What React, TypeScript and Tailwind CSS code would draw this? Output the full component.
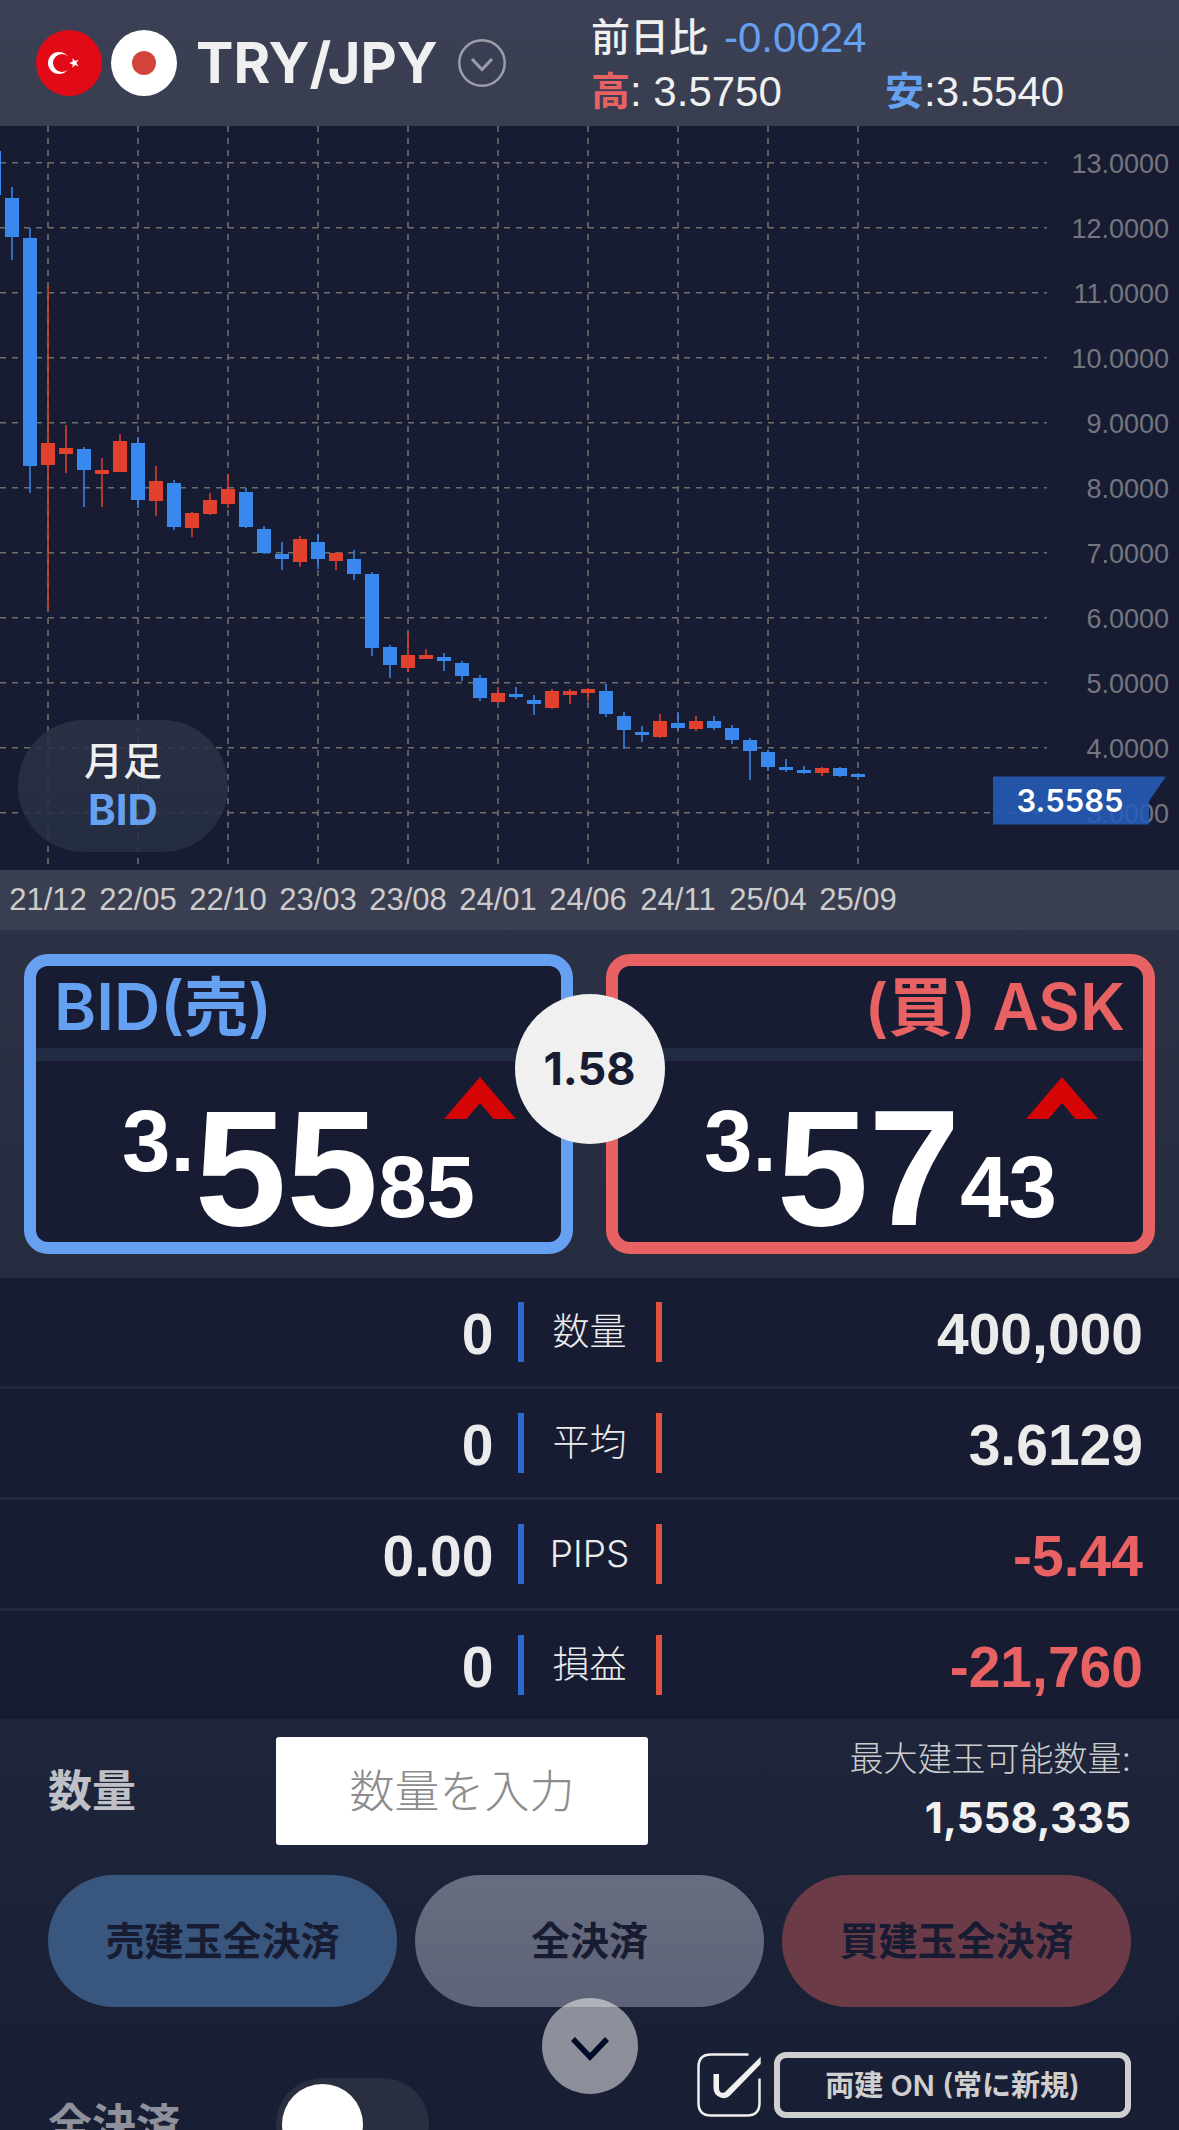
import React from "react";

type Candle = [dir: "u" | "d", open: number, close: number, high: number, low: number];

const CANDLES: Candle[] = [
  ["d", 151, 195, 151, 195],
  ["d", 198, 237, 187, 260],
  ["d", 238, 466, 228, 493],
  ["u", 443, 465, 286, 609],
  ["u", 448, 454, 425, 473],
  ["d", 449, 470, 447, 507],
  ["u", 470, 474, 458, 507],
  ["u", 441, 472, 434, 472],
  ["d", 443, 500, 437, 508],
  ["u", 481, 501, 466, 516],
  ["d", 483, 527, 480, 530],
  ["u", 513, 528, 512, 537],
  ["u", 500, 514, 493, 515],
  ["u", 489, 504, 474, 508],
  ["d", 492, 527, 488, 528],
  ["d", 529, 553, 526, 554],
  ["d", 554, 559, 542, 570],
  ["u", 539, 562, 536, 567],
  ["d", 542, 559, 534, 569],
  ["u", 553, 561, 552, 570],
  ["d", 559, 574, 550, 580],
  ["d", 574, 648, 572, 656],
  ["d", 647, 665, 645, 678],
  ["u", 655, 668, 633, 672],
  ["u", 655, 659, 649, 659],
  ["d", 657, 661, 653, 671],
  ["d", 663, 676, 661, 681],
  ["d", 678, 698, 675, 701],
  ["u", 693, 702, 687, 702],
  ["d", 694, 697, 687, 699],
  ["d", 700, 704, 695, 715],
  ["u", 691, 708, 689, 709],
  ["u", 691, 695, 689, 704],
  ["u", 689, 693, 688, 701],
  ["d", 691, 714, 684, 717],
  ["d", 716, 730, 712, 749],
  ["d", 732, 735, 726, 742],
  ["u", 721, 737, 714, 738],
  ["d", 723, 728, 712, 730],
  ["u", 721, 729, 716, 731],
  ["d", 721, 728, 716, 730],
  ["d", 728, 740, 725, 744],
  ["d", 740, 751, 738, 780],
  ["d", 752, 767, 750, 771],
  ["d", 767, 770, 759, 772],
  ["d", 770, 773, 766, 774],
  ["u", 768, 773, 767, 776],
  ["d", 768, 776, 767, 777],
  ["d", 774, 777, 773, 778],
];

const CHART_TOP = 126;
const PRICES = ["13.0000", "12.0000", "11.0000", "10.0000", "9.0000", "8.0000", "7.0000", "6.0000", "5.0000", "4.0000", "3.0000"];
const MONTHS = ["21/12", "22/05", "22/10", "23/03", "23/08", "24/01", "24/06", "24/11", "25/04", "25/09"];

const HELV = "font-['Liberation_Sans','Noto_Sans_CJK_JP',sans-serif]";
const INTER = "font-['Inter','Noto_Sans_CJK_JP',sans-serif]";

function Header() {
  return (
    <header className="flex h-[126px] shrink-0 items-center bg-linear-to-b from-[#3b4054] to-[#383d50] pl-9 text-[#f0f0f0]">
      <button type="button" aria-label="通貨ペア TRY/JPY" className="flex w-[555px] shrink-0 items-center">
        <svg viewBox="0 0 66 66" className="mr-[9px] size-[66px]" aria-hidden="true">
          <circle cx="33" cy="33" r="33" fill="#e30a17" />
          <circle cx="23" cy="33" r="11" fill="#fff" />
          <circle cx="26" cy="33" r="9" fill="#e30a17" />
          <path d="M33 33l3.6-1.2v-3.9l2.3 3.1 3.7-1.2-2.3 3.2 2.3 3.2-3.7-1.2-2.3 3.1v-3.9z" fill="#fff" />
        </svg>
        <svg viewBox="0 0 66 66" className="size-[66px]" aria-hidden="true">
          <circle cx="33" cy="33" r="33" fill="#fff" />
          <circle cx="33" cy="33" r="12" fill="#d3453c" />
        </svg>
        <span className={`${INTER} ml-[19px] text-[56px] leading-none font-bold`}>TRY/JPY</span>
        <svg viewBox="0 0 48 48" className="ml-5 size-12" fill="none" stroke="#9b9ea9" strokeWidth="2.5" aria-hidden="true">
          <circle cx="24" cy="24" r="22.7" />
          <path d="M14 20l10 10.500 10-10.500" strokeWidth="3" />
        </svg>
      </button>
      <dl className={`${HELV} grid w-[590px] grid-cols-2 pt-1 text-[42px] leading-[54px]`}>
        <div className="col-span-2 flex items-center gap-4">
          <dt className="text-[39px] font-medium">前日比</dt>
          <dd className="text-[#66a1f1]">-0.0024</dd>
        </div>
        <div className="flex items-center">
          <dt className="text-[39px] font-bold text-[#e96263]">高</dt>
          <dd>: 3.5750</dd>
        </div>
        <div className="flex items-center">
          <dt className="text-[39px] font-bold text-[#66a1f1]">安</dt>
          <dd>:3.5540</dd>
        </div>
      </dl>
    </header>
  );
}

function Chart() {
  return (
    <section aria-label="チャート" className="relative h-[744px] shrink-0 overflow-hidden">
      <svg width="1179" height="744" viewBox="0 126 1179 744" className="block" aria-hidden="true">
        <g stroke="#5d5d5e" strokeWidth="2" strokeDasharray="6 6">
          {MONTHS.map((m, i) => (
            <line key={m} x1={48 + i * 90} x2={48 + i * 90} y1={CHART_TOP} y2="864" />
          ))}
        </g>
        <g stroke="#6e6e6a" strokeWidth="1.500" strokeDasharray="6 6">
          {PRICES.map((p, i) => (
            <line key={p} x1="0" x2="1047" y1={162.75 + i * 65} y2={162.75 + i * 65} />
          ))}
        </g>
        {CANDLES.map(([dir, open, close, high, low], i) => (
          <g key={i} fill={dir === "u" ? "#e2412d" : "#3888ee"}>
            <rect x={i * 18 - 7} y={high} width="2" height={low - high} opacity="0.750" />
            <rect x={i * 18 - 13} y={open} width="14" height={close - open} />
          </g>
        ))}
        <g fill="#74757f" fontFamily="'Liberation Sans', sans-serif" fontSize="27" textAnchor="end">
          {PRICES.map((p, i) => (
            <text key={p} x="1169" y={173 + i * 65}>{p}</text>
          ))}
        </g>
        <path d="M993 776.500H1166L1149 801V824.500H993z" fill="#255cb8" opacity="0.880" />
        <text x="1070" y="812" fill="#fff" fontFamily="Inter, sans-serif" fontSize="31" fontWeight="600" textAnchor="middle">3.5585</text>
      </svg>
      <button
        type="button"
        className={`${INTER} absolute bottom-[18px] left-[18px] flex h-[132px] w-[210px] flex-col items-center justify-center rounded-full bg-linear-to-b from-[#2e3246]/85 to-[#263044]/85`}
      >
        <span className="text-[39px] leading-[48px] font-medium text-[#f0f0f0]">月足</span>
        <span className="text-[42px] leading-[50px] font-bold text-[#66a1f1]">BID</span>
      </button>
    </section>
  );
}

function DateAxis() {
  return (
    <ol className={`${HELV} flex h-[60px] shrink-0 items-center bg-[#3a3e51] pl-[3px] text-[31px] text-[#cccccc]`}>
      {MONTHS.map((m) => (
        <li key={m} className="w-[90px] text-center">{m}</li>
      ))}
    </ol>
  );
}

function PriceBox({ side, parts }: { side: "bid" | "ask"; parts: [string, string, string] }) {
  const bid = side === "bid";
  return (
    <button
      type="button"
      className={`relative flex h-[300px] flex-1 flex-col rounded-[24px] border-[12px] bg-[#171c33] ${bid ? "border-[#66a1f1]" : "border-[#e96263]"}`}
    >
      <span
        className={`${INTER} flex h-[82px] w-full shrink-0 items-center px-[18px] text-[64px] leading-none font-semibold ${bid ? "text-[#66a1f1]" : "justify-end text-[#e96263]"}`}
      >
        {bid ? "BID(売)" : "(買) ASK"}
      </span>
      <span className="h-[13px] w-full shrink-0 bg-[#212b43]" />
      <span className={`${HELV} flex h-[181px] w-full shrink-0 items-start justify-center pt-8 font-bold text-white`}>
        <span className="pt-1 text-[87px] leading-none">{parts[0]}</span>
        <span className="text-[165px] leading-[150px]">{parts[1]}</span>
        <span className="self-end pb-3 text-[87px] leading-none">{parts[2]}</span>
      </span>
      <svg viewBox="0 0 72 42" className="absolute top-[111px] right-[45px] h-[42px] w-[72px]" aria-hidden="true">
        <path d="M36 0L72 42H49.500L36 26 22.500 42H0z" fill="#d60505" />
      </svg>
    </button>
  );
}

function PricePanel() {
  return (
    <section className="relative flex h-[348px] shrink-0 gap-[33px] bg-linear-to-b from-[#2d3145] to-[#252c3f] p-6">
      <PriceBox side="bid" parts={["3.", "55", "85"]} />
      <PriceBox side="ask" parts={["3.", "57", "43"]} />
      <div className={`${INTER} absolute top-16 left-1/2 flex size-[150px] -translate-x-1/2 items-center justify-center rounded-full bg-[#f0f0f0] text-[45px] font-bold text-[#171c33]`}>
        1.58
      </div>
    </section>
  );
}

const ROWS = [
  { label: "数量", sell: "0", buy: "400,000", loss: false },
  { label: "平均", sell: "0", buy: "3.6129", loss: false },
  { label: "PIPS", sell: "0.00", buy: "-5.44", loss: true },
  { label: "損益", sell: "0", buy: "-21,760", loss: true },
];

function Positions() {
  return (
    <table className="w-full shrink-0 table-fixed border-separate border-spacing-0 bg-[#171c33]">
      <tbody>
        {ROWS.map((r) => (
          <tr key={r.label} className="h-[111px] last:h-[108px] [&>*]:border-[#22283e] [&>*]:border-b-[3px] [&:last-child>*]:border-b-0">
            <td className={`${HELV} pt-1 pr-6 text-right text-[57px] leading-none font-bold text-[#ebebeb]`}>{r.sell}</td>
            <th scope="row" className="w-36 p-0">
              <div className={`${INTER} flex h-[60px] items-center justify-center border-x-[6px] border-l-[#2c6ad1] border-r-[#e1513f] text-[37px] font-light text-[#ebebeb]`}>
                {r.label}
              </div>
            </th>
            <td className={`${HELV} pt-1 pr-9 text-right text-[57px] leading-none font-bold ${r.loss ? "text-[#e96263]" : "text-[#ebebeb]"}`}>{r.buy}</td>
          </tr>
        ))}
      </tbody>
    </table>
  );
}

function OrderPanel() {
  const pill = "h-[132px] flex-1 rounded-full text-[39px] font-bold text-[#171c33]";
  return (
    <section className={`${INTER} flex flex-1 flex-col bg-linear-to-b from-[#1f263b] via-[#1b2237] to-[#171d33] px-12 pt-[18px]`}>
      <div className="flex h-[108px] shrink-0 items-center">
        <label htmlFor="qty" className="w-[228px] text-[44px] font-bold text-[#c0c1c8]">数量</label>
        <input
          id="qty"
          type="text"
          placeholder="数量を入力"
          className="h-[108px] w-[372px] rounded-[3px] bg-white text-center text-[45px] text-[#171c33] placeholder:font-light placeholder:text-[#8c8c8c]"
        />
        <dl className="flex-1 text-right">
          <dt className="text-[34px] leading-[54px] font-light text-[#cccccc]">最大建玉可能数量:</dt>
          <dd className="text-[42px] leading-[64px] font-bold text-[#f0f0f0]">1,558,335</dd>
        </dl>
      </div>
      <div className="mt-[30px] flex shrink-0 gap-[18px]">
        <button type="button" className={`${pill} bg-[#39567f]`}>売建玉全決済</button>
        <button type="button" className={`${pill} bg-linear-to-b from-[#696d80] to-[#5f6377]`}>全決済</button>
        <button type="button" className={`${pill} bg-[#6c3b48]`}>買建玉全決済</button>
      </div>
      <div className="mt-[45px] flex shrink-0 items-start">
        <label htmlFor="close-all" className="w-[228px] pt-[40px] text-[44px] leading-[66px] font-bold text-[#8e909b]">全決済</label>
        <span className="relative mt-[26px] h-[93px] w-[153px] rounded-full bg-[#292e40]">
          <input id="close-all" type="checkbox" role="switch" className="absolute inset-0 size-full appearance-none rounded-full" />
          <span className="pointer-events-none absolute top-[6px] left-[6px] size-[81px] rounded-full bg-white" />
        </span>
        <label className="relative ml-auto size-[66px] shrink-0">
          <input type="checkbox" defaultChecked aria-label="両建" className="absolute inset-0 size-full appearance-none" />
          <svg viewBox="0 0 66 66" className="pointer-events-none relative size-[66px]" fill="none" stroke="#f0f0f0" aria-hidden="true">
            <path d="M52.500 2.500H15Q2.500 2.500 2.500 15V51Q2.500 63.500 15 63.500H51Q63.500 63.500 63.500 51V26.500" strokeWidth="2.500" />
            <path d="M17.500 22H23V36Q23 42 28.500 40.500L64.700 4.700V12L33.500 44Q30 47.300 24.500 45.500Q17.500 43 17.500 36Z" fill="#f0f0f0" stroke="none" />
          </svg>
        </label>
        <button type="button" className="ml-[12px] h-[66px] w-[357px] rounded-[12px] border-[6px] border-[#cfcfcf] text-[29px] leading-none font-semibold text-[#cfcfcf]">
          両建 ON (常に新規)
        </button>
      </div>
    </section>
  );
}

export default function App() {
  return (
    <main lang="ja" className="relative flex h-screen w-full flex-col overflow-hidden bg-[#171c33]">
      <Header />
      <Chart />
      <DateAxis />
      <PricePanel />
      <Positions />
      <OrderPanel />
      <button
        type="button"
        aria-label="下へ"
        className="absolute bottom-9 left-1/2 flex size-24 -translate-x-1/2 items-center justify-center rounded-full bg-white/50"
      >
        <svg viewBox="0 0 38 30" className="h-[30px] w-[38px]" fill="none" stroke="#000d28" strokeWidth="5.500" aria-hidden="true">
          <path d="M2 8L19 26L36 8" />
        </svg>
      </button>
    </main>
  );
}
